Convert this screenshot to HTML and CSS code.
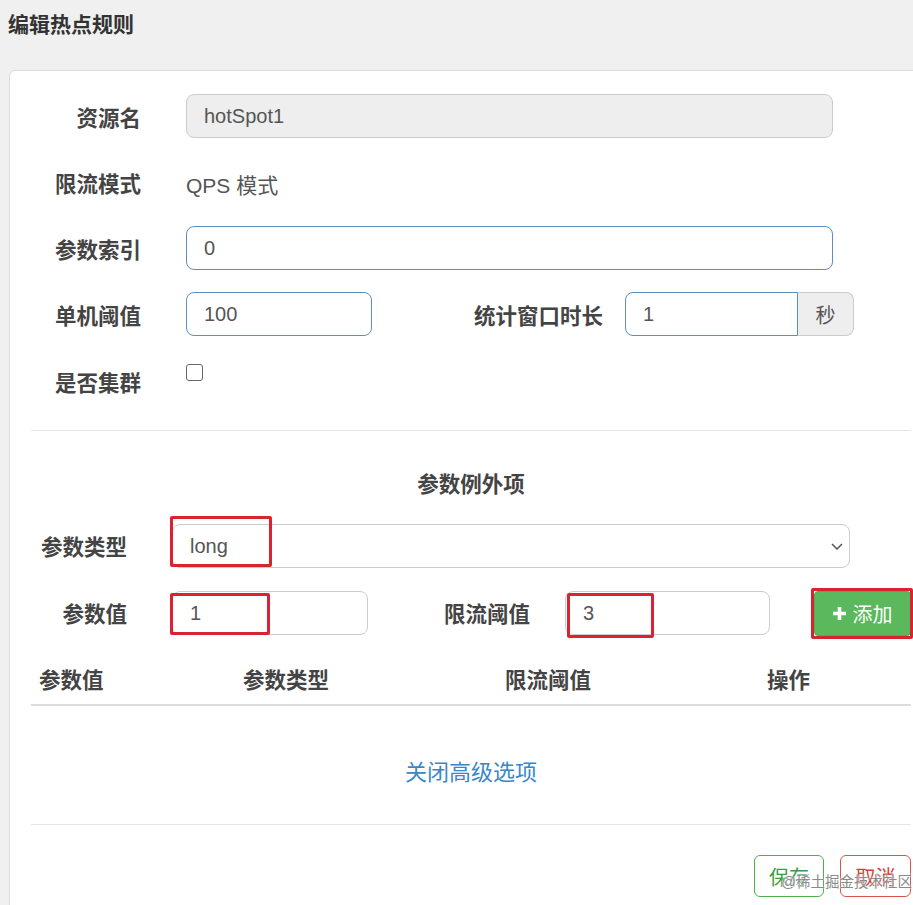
FILE: index.html
```html
<!DOCTYPE html>
<html>
<head>
<meta charset="utf-8">
<meta name="viewport" content="width=device-width, initial-scale=1">
<title>编辑热点规则</title>
<link rel="stylesheet" href="styles.css">
</head>
<body>
<h4 class="page-title">编辑热点规则</h4>
<div class="panel">
  <form class="rule-form">
    <div class="form-row">
      <label class="form-label">资源名</label>
      <input class="form-input input-wide is-readonly" type="text" value="hotSpot1" readonly>
    </div>
    <div class="form-row">
      <label class="form-label">限流模式</label>
      <span class="form-static">QPS 模式</span>
    </div>
    <div class="form-row">
      <label class="form-label">参数索引</label>
      <input class="form-input input-wide is-active" type="text" value="0">
    </div>
    <div class="form-row">
      <label class="form-label">单机阈值</label>
      <input class="form-input input-count is-active" type="text" value="100">
      <label class="form-label label-window">统计窗口时长</label>
      <div class="input-group">
        <input class="form-input input-window is-active" type="text" value="1">
        <span class="input-addon">秒</span>
      </div>
    </div>
    <div class="form-row row-check">
      <label class="form-label">是否集群</label>
      <input type="checkbox" class="check">
    </div>

    <hr class="divider">

    <h4 class="section-title">参数例外项</h4>
    <div class="item-row">
      <label class="item-label">参数类型</label>
      <div class="field field-type">
        <select class="form-input item-select">
          <option>long</option>
        </select>
        <svg class="caret" width="12" height="7" viewBox="0 0 12 7"><path d="M1 1l5 5 5-5" fill="none" stroke="#555" stroke-width="1.5"/></svg>
        <span class="mark mark-type"></span>
      </div>
    </div>
    <div class="item-row">
      <label class="item-label">参数值</label>
      <div class="field field-value">
        <input class="form-input" type="text" value="1">
        <span class="mark mark-value"></span>
      </div>
      <label class="item-label label-limit">限流阈值</label>
      <div class="field field-limit">
        <input class="form-input" type="text" value="3">
        <span class="mark mark-limit"></span>
      </div>
      <div class="field field-add">
        <button type="button" class="btn-add">
          <svg width="13" height="13" viewBox="0 0 13 13"><path d="M6.5 0v13M0 6.5h13" stroke="#fff" stroke-width="3.6"/></svg>
          添加
        </button>
        <span class="mark mark-add"></span>
      </div>
    </div>

    <table class="item-table">
      <thead>
        <tr><th class="col-value">参数值</th><th class="col-type">参数类型</th><th class="col-limit">限流阈值</th><th>操作</th></tr>
      </thead>
    </table>

    <div class="toggle">
      <a class="toggle-link">关闭高级选项</a>
    </div>

    <hr class="divider footer-line">

    <div class="actions">
      <button type="button" class="btn btn-save">保存</button>
      <button type="button" class="btn btn-cancel">取消</button>
    </div>
  </form>
</div>
<span class="watermark">@稀土掘金技术社区</span>
</body>
</html>
```

FILE: styles.css
```css
* {
  box-sizing: border-box;
}
html, body {
  margin: 0;
}
body {
  position: relative;
  height: 905px;
  overflow: hidden;
  background: #f0f0f0;
  font-family: "Liberation Sans", "Noto Sans CJK SC", sans-serif;
  color: #333;
}

.page-title {
  margin: 0;
  padding: 12px 8px;
  font-size: 21px;
  line-height: 26px;
  font-weight: 700;
  color: #333;
}

.panel {
  width: 924px;
  margin: 20px 0 0 9px;
  padding: 23px 21px 40px;
  background: #fff;
  border: 1px solid #ddd;
  border-radius: 6px;
}

/* top form */
.form-row {
  display: flex;
  align-items: center;
  height: 44px;
  margin-bottom: 22px;
}
.form-label {
  flex: none;
  width: 110px;
  margin-right: 45px;
  padding-top: 5px;
  text-align: right;
  font-size: 21.5px;
  line-height: 30px;
  font-weight: 700;
  color: #444;
  white-space: nowrap;
}
.form-static {
  padding-top: 4px;
  font-size: 21px;
  color: #555;
}
.form-input {
  height: 44px;
  padding: 0 17px;
  font: 20px "Liberation Sans", "Noto Sans CJK SC", sans-serif;
  color: #555;
  background: #fff;
  border: 1px solid #ccc;
  border-radius: 8px;
  outline: none;
}
.input-wide {
  width: 647px;
}
.is-readonly {
  background: #eee;
}
.is-active {
  border-color: #5b8fc0;
}
.input-count {
  width: 186px;
}
.label-window {
  width: 231px;
  margin-right: 22px;
}
.input-group {
  display: flex;
}
.input-window {
  width: 173px;
  border-radius: 8px 0 0 8px;
}
.input-addon {
  display: flex;
  align-items: center;
  justify-content: center;
  width: 56px;
  height: 44px;
  font-size: 20px;
  color: #555;
  background: #eee;
  border: 1px solid #ccc;
  border-left: 0;
  border-radius: 0 8px 8px 0;
}
.row-check {
  align-items: flex-start;
  margin-bottom: 0;
}
.row-check .form-label {
  padding-top: 11px;
}
.check {
  appearance: none;
  width: 17px;
  height: 17px;
  margin: 6px 0 0;
  border: 1.5px solid #666;
  border-radius: 3px;
  background: #fff;
}

.divider {
  height: 0;
  margin: 28px 0 0;
  border: 0;
  border-top: 1px solid #e5e5e5;
}

/* exception items */
.section-title {
  margin: 39px 0 24px;
  text-align: center;
  font-size: 21.5px;
  line-height: 30px;
  font-weight: 700;
  color: #444;
}
.item-row {
  display: flex;
  align-items: center;
  height: 44px;
  margin-bottom: 23px;
}
.item-row:last-of-type {
  margin-bottom: 0;
}
.item-label {
  flex: none;
  width: 96px;
  margin-right: 45px;
  padding-top: 4px;
  text-align: right;
  font-size: 21.5px;
  line-height: 30px;
  font-weight: 700;
  color: #444;
}
.label-limit {
  width: 162px;
  margin-right: 35px;
}
.field {
  position: relative;
  flex: none;
}
.field .form-input {
  width: 100%;
}
.field-type {
  width: 678px;
}
.item-select {
  appearance: none;
}
.caret {
  position: absolute;
  right: 7px;
  top: 19px;
}
.field-value {
  width: 196px;
}
.field-limit {
  width: 205px;
}
.field-add {
  margin-left: 44px;
}
.btn-add {
  display: flex;
  align-items: center;
  justify-content: center;
  gap: 7px;
  width: 97px;
  height: 45px;
  padding: 0;
  font: 20px "Liberation Sans", "Noto Sans CJK SC", sans-serif;
  color: #fff;
  background: #5cb85c;
  border: 1px solid #4cae4c;
  border-radius: 4px;
}

/* red highlight boxes */
.mark {
  position: absolute;
  border: 3px solid #d9232e;
  border-radius: 2px;
  pointer-events: none;
}
.mark-type {
  left: -2px;
  top: -8px;
  width: 102px;
  height: 51px;
}
.mark-value {
  left: -2px;
  top: 2px;
  width: 100px;
  height: 42px;
}
.mark-limit {
  left: 2px;
  top: 2px;
  width: 87px;
  height: 45px;
}
.mark-add {
  left: -3px;
  top: -3px;
  width: 102px;
  height: 51px;
}

.item-table {
  width: 880px;
  margin-top: 22px;
  border-collapse: collapse;
}
.item-table th {
  padding: 8px;
  text-align: left;
  font-size: 21.5px;
  line-height: 30px;
  font-weight: 700;
  color: #444;
  border-bottom: 2px solid #ddd;
}
.col-value {
  width: 204px;
}
.col-type,
.col-limit {
  width: 262px;
}

.toggle {
  padding: 52px 0 34px;
  text-align: center;
  line-height: 30px;
}
.toggle-link {
  font-size: 22px;
  color: #3a87c8;
  cursor: pointer;
}
.footer-line {
  margin: 0;
}

.actions {
  display: flex;
  justify-content: flex-end;
  gap: 16px;
  margin-top: 30px;
}
.btn {
  width: 70px;
  height: 42px;
  padding: 0;
  font: 20px "Liberation Sans", "Noto Sans CJK SC", sans-serif;
  background: #fff;
  border: 1.5px solid;
  border-radius: 6px;
}
.btn-save {
  color: #3f9a47;
  border-color: #4cae4c;
}
.btn-cancel {
  width: 71px;
  color: #d43f3a;
  border-color: #d9534f;
}

.watermark {
  position: absolute;
  right: 1px;
  top: 872px;
  font-size: 14.5px;
  line-height: 20px;
  color: #8a8a8a;
  text-shadow: 0 0 2px #fff, 0 0 2px #fff;
  white-space: nowrap;
}
```
